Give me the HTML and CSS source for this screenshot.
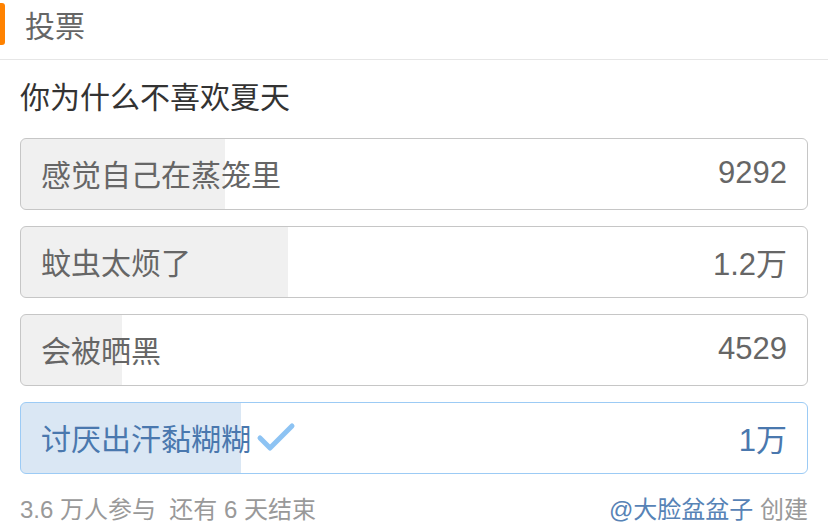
FILE: index.html
```html
<!DOCTYPE html>
<html lang="zh-CN">
<head>
    <meta charset="UTF-8">
    <meta name="viewport" content="width=device-width, initial-scale=1.0">
    <title>投票</title>
    <link rel="stylesheet" href="styles.css">
</head>
<body>

    <div class="header">
        <span class="mark"></span>
        <span class="title">投票</span>
    </div>

    <div class="poll">
        <div class="question">你为什么不喜欢夏天</div>

        <div class="option" style="--p: 204px">
            <span class="label">感觉自己在蒸笼里</span>
            <span class="count">9292</span>
        </div>
        <div class="option" style="--p: 267px">
            <span class="label">蚊虫太烦了</span>
            <span class="count">1.2万</span>
        </div>
        <div class="option" style="--p: 101px">
            <span class="label">会被晒黑</span>
            <span class="count">4529</span>
        </div>
        <div class="option chosen" style="--p: 220px">
            <span class="label">讨厌出汗黏糊糊</span>
            <svg class="check" width="40" height="32" viewBox="0 0 40 32">
                <path d="M4 16 L14 26 L36 4" fill="none" stroke="#8dc3f3" stroke-width="5" stroke-linecap="round" stroke-linejoin="round"/>
            </svg>
            <span class="count">1万</span>
        </div>

        <div class="footer">
            <span>3.6 万人参与&nbsp;&nbsp;还有 6 天结束</span>
            <span><a class="author">@大脸盆盆子</a> 创建</span>
        </div>
    </div>

</body>
</html>
```

FILE: styles.css
```css
body {
    margin: 0;
    font-family: "Liberation Sans", "Noto Sans CJK SC", sans-serif;
    background: #fff;
}
.header {
    height: 59px;
    display: flex;
    align-items: center;
    border-bottom: 1px solid #e6e6e6;
}
.mark {
    width: 5px;
    height: 42px;
    background: #ff8200;
    border-radius: 0 3px 3px 0;
    margin-top: -11px;
}
.title {
    margin-left: 20px;
    margin-top: -12px;
    font-size: 30px;
    color: #666;
}
.poll {
    padding: 0 20px;
}
.question {
    height: 70px;
    padding-bottom: 8px;
    display: flex;
    align-items: center;
    font-size: 30px;
    color: #333;
}
.option {
    height: 70px;
    margin-bottom: 16px;
    border: 1px solid #c6c6c6;
    border-radius: 6px;
    display: flex;
    align-items: center;
    padding: 0 20px;
    font-size: 30px;
    color: #666;
    background: linear-gradient(to right, #f0f0f0 var(--p), #fff var(--p));
}
.option .label {
    margin-top: -3px;
}
.option .count {
    margin-left: auto;
    font-size: 31px;
    margin-top: -2px;
}
.option.chosen {
    border-color: #9ccbf5;
    color: #4a78ae;
    background: linear-gradient(to right, #dae7f4 var(--p), #fff var(--p));
}
.check {
    margin-left: 5px;
}
.footer {
    display: flex;
    justify-content: space-between;
    margin-top: 4px;
    font-size: 24px;
    color: #999;
}
.author {
    color: #5783b6;
}
```
